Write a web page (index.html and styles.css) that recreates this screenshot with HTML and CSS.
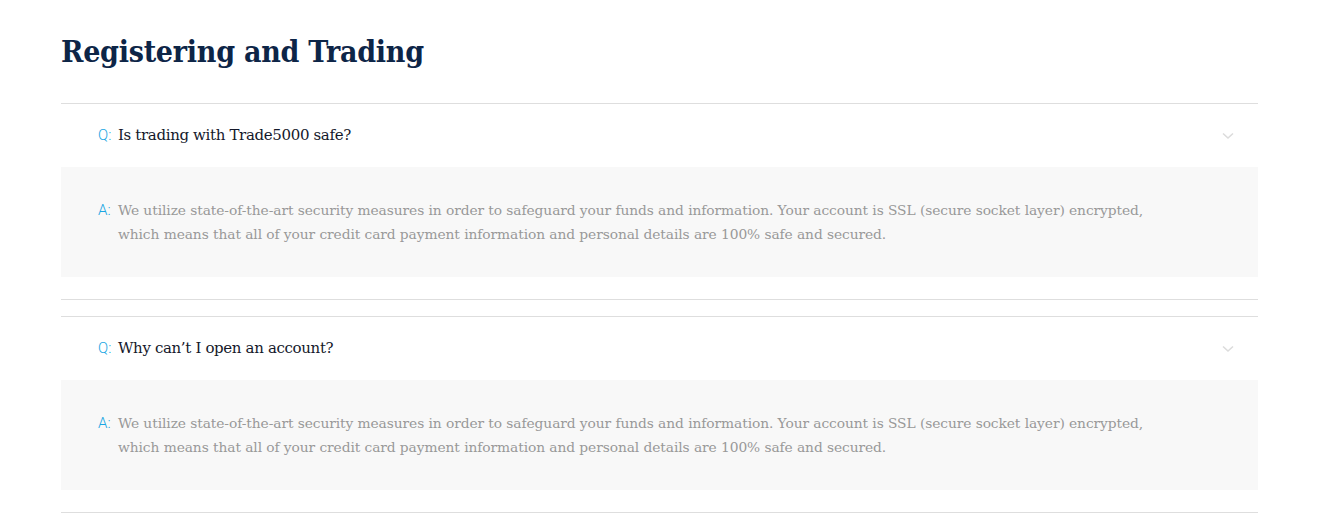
FILE: index.html
```html
<!DOCTYPE html>
<html lang="en">
<head>
<meta charset="utf-8">
<title>FAQ - Registering and Trading</title>
<link rel="stylesheet" href="styles.css">
</head>
<body>
<section class="faq">
  <h2 class="faq-title">Registering and Trading</h2>

  <div class="faq-item">
    <div class="faq-question">
      <span class="faq-label">Q:</span>
      <span class="faq-q-text">Is trading with Trade5000 safe?</span>
      <svg class="faq-chevron" width="12" height="8" viewBox="0 0 12 8"><path d="M1 1.5 L6 6 L11 1.5" fill="none" stroke="#dcdcdc" stroke-width="1.6"/></svg>
    </div>
    <div class="faq-answer">
      <span class="faq-label">A:</span>
      <p class="faq-a-text">We utilize state-of-the-art security measures in order to safeguard your funds and information. Your account is SSL (secure socket layer) encrypted, which means that all of your credit card payment information and personal details are 100% safe and secured.</p>
    </div>
  </div>

  <div class="faq-item">
    <div class="faq-question">
      <span class="faq-label">Q:</span>
      <span class="faq-q-text">Why can’t I open an account?</span>
      <svg class="faq-chevron" width="12" height="8" viewBox="0 0 12 8"><path d="M1 1.5 L6 6 L11 1.5" fill="none" stroke="#dcdcdc" stroke-width="1.6"/></svg>
    </div>
    <div class="faq-answer">
      <span class="faq-label">A:</span>
      <p class="faq-a-text">We utilize state-of-the-art security measures in order to safeguard your funds and information. Your account is SSL (secure socket layer) encrypted, which means that all of your credit card payment information and personal details are 100% safe and secured.</p>
    </div>
  </div>
</section>
</body>
</html>
```

FILE: styles.css
```css
html, body {
  margin: 0;
  padding: 0;
  background: #ffffff;
}

.faq {
  width: 1197px;
  margin-left: 61px;
  padding-top: 33px;
  font-family: "DejaVu Serif", "Liberation Serif", serif;
}

.faq-title {
  margin: 0 0 32px 0;
  font-family: "DejaVu Serif Condensed", "DejaVu Serif", serif;
  font-size: 30px;
  line-height: 38px;
  font-weight: 700;
  color: #0d2547;
  letter-spacing: -0.25px;
}

.faq-item {
  border-top: 1px solid #dedede;
  border-bottom: 1px solid #dedede;
  padding-bottom: 22px;
  margin-bottom: 16px;
}

.faq-question {
  display: flex;
  align-items: center;
  height: 61px;
  padding: 0 24px 2px 37px;
}

.faq-label {
  font-family: "Roboto", "Liberation Sans", sans-serif;
  font-weight: 300;
  color: #1ba6e3;
  width: 20px;
  flex: none;
}

.faq-question .faq-label {
  font-size: 15px;
}

.faq-q-text {
  flex: 1;
  font-size: 15px;
  color: #14182a;
  letter-spacing: -0.35px;
}

.faq-chevron {
  flex: none;
  margin-top: 3px;
}

.faq-answer {
  display: flex;
  align-items: flex-start;
  background: #f8f8f8;
  padding: 31px 90px 31px 37px;
}

.faq-answer .faq-label {
  font-size: 15px;
  line-height: 24px;
}

.faq-a-text {
  margin: 0;
  font-size: 13.8px;
  line-height: 24px;
  color: #999999;
  letter-spacing: -0.08px;
}
```
